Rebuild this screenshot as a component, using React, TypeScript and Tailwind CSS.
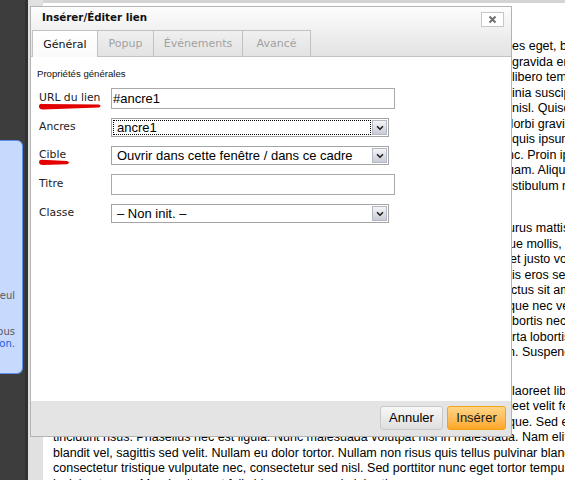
import { ChevronDown } from 'lucide-react';

type Frag = { hide: string; show: string; pre: string };

const para1: Frag[] = [
  { hide: 'Lorem ipsum dolor sit amet, consectetur adipiscing elit. Aenean ut orci vel massa suscipit pulvinar. Nulla ultrici', show: 'es eget, blandit vitae', pre: 'w-[459px]' },
  { hide: 'Nulla sollicitudin, libero vitae aliquam ultrices, quam diam ultricies augue, vitae pharetra neque nisi ut ligula, ', show: 'gravida erat', pre: 'w-[459px]' },
  { hide: 'Curabitur vel lectus at nisl consequat tempus. Quisque consequat aliquam nunc, eu hendrerit urna tristique non, ', show: 'libero tempor', pre: 'w-[459px]' },
  { hide: 'Praesent aliquet pretium erat, quis scelerisque dui tincidunt et. Phasellus eleifend mauris in arcu lac', show: 'inia suscipit', pre: 'w-[459px]' },
  { hide: 'Sed semper dolor vitae risus venenatis vel condimentum turpis euismod. Donec feugiat elementum ', show: 'nisl. Quisque', pre: 'w-[459px]' },
  { hide: 'Etiam consequat eleifend ante, ac sollicitudin neque ornare in. Mauris ac leo at mi tincidunt fringilla. ', show: 'Morbi gravida', pre: 'w-[450px]' },
  { hide: 'Vivamus semper lectus sed justo faucibus dictum. Aliquam vel urna eget dolor dictum aliquet ut', show: ' quis ipsum', pre: 'w-[459px]' },
  { hide: 'Mauris placerat, lacus eget molestie hendrerit, sapien velit ultrices neque, sed gravida ipsum mi in nu', show: 'nc. Proin ipsum', pre: 'w-[454px]' },
  { hide: 'Donec vitae metus nisl, et adipiscing ante. Integer vehicula eleifend lorem, ac posuere purus aliq', show: 'uam. Aliquam', pre: 'w-[454px]' },
  { hide: 'Fusce tempor, metus sed accumsan vehicula, erat leo fermentum mauris, vitae lobortis urna ve', show: 'stibulum nec', pre: 'w-[459px]' },
];

const para2: Frag[] = [
  { hide: 'Pellentesque habitant morbi tristique senectus et netus et malesuada fames ac turpis egestas. Nulla p', show: 'urus mattis', pre: 'w-[455px]' },
  { hide: 'Vestibulum dapibus iaculis dui, sit amet ullamcorper nisi congue vitae. Aliquam erat volutpat. Quisq', show: 'ue mollis,', pre: 'w-[456px]' },
  { hide: 'Donec ullamcorper, diam eu scelerisque convallis, lorem libero dictum magna, at tincidunt nisi felis ', show: 'et justo vol', pre: 'w-[457px]' },
  { hide: 'Integer consequat auctor mauris, quis fermentum nibh euismod vitae. Vestibulum ut mauris lacinia ', show: 'is eros sed', pre: 'w-[459px]' },
  { hide: 'Cras condimentum rutrum metus, at scelerisque eros mollis at. Nunc feugiat aliquam tincidunt. Sed le', show: 'ctus sit amet', pre: 'w-[458px]' },
  { hide: 'Morbi at nunc elit, vel posuere mi. Nam scelerisque tincidunt urna at lobortis. Fusce vitae dolor ne', show: 'que nec vel', pre: 'w-[455px]' },
  { hide: 'Curabitur molestie, arcu quis consequat scelerisque, erat tortor faucibus ligula, in tempor mi lo', show: 'bortis nec', pre: 'w-[459px]' },
  { hide: 'Aliquam eleifend faucibus massa, vitae porttitor neque adipiscing sed. Sed volutpat dolor, po', show: 'rta lobortis', pre: 'w-[459px]' },
  { hide: 'Nulla facilisi. Ut rutrum massa nec dui volutpat vel tempor turpis placerat. Etiam consequat nisl ege', show: 'n. Suspendisse', pre: 'w-[455px]' },
];

const para3Top: Frag[] = [
  { hide: 'Phasellus ut urna ut magna posuere elementum. Maecenas sit amet velit nec mauris egestas fringilla et ', show: 'laoreet libero', pre: 'w-[459px]' },
  { hide: 'Aenean vel justo quam, a ullamcorper arcu. Sed ultricies, nunc vitae commodo dictum, lorem turpis dapibus lao', show: 'eet velit feugiat', pre: 'w-[459px]' },
  { hide: 'Praesent consectetur elementum nisl, id venenatis ante lacinia sed. Integer at diam vel erat accumsan tristi', show: 'que. Sed eget', pre: 'w-[455px]' },
];

const para3Full = [
  'tincidunt risus. Phasellus nec est ligula. Nunc malesuada volutpat nisl in malesuada. Nam elit',
  'blandit vel, sagittis sed velit. Nullam eu dolor tortor. Nullam non risus quis tellus pulvinar blandit',
  'consectetur tristique vulputate nec, consectetur sed nisl. Sed porttitor nunc eget tortor tempus congue',
  'lacinia et nunc. Mauris sit amet felis id urna commodo lobortis.',
];

const FragLine = ({ f }: { f: Frag }) => (
  <div className="flex h-[15.5px] whitespace-nowrap">
    <span className={`${f.pre} shrink-0 overflow-hidden`}>{f.hide}</span>
    <span>{f.show}</span>
  </div>
);

const Arrow = () => (
  <span className="w-[15px] h-[15px] m-px flex items-center justify-center border border-[#b4b7c4] bg-gradient-to-b from-[#f4f5f8] to-[#c9ccd6]">
    <ChevronDown className="w-[10px] h-[10px] text-[#222]" strokeWidth={4} />
  </span>
);

const Select = ({ value, focused }: { value: string; focused?: boolean }) => (
  <div className="w-[278px] h-[19px] border border-[#a4a4a4] bg-white flex items-center">
    <div className={focused ? 'flex-1 h-[15px] ml-px flex items-center pl-[3px] border border-dotted border-black' : 'flex-1 h-[15px] ml-px flex items-center pl-[4px]'}>
      {value}
    </div>
    <Arrow />
  </div>
);

const Input = ({ value }: { value: string }) => (
  <div className="w-[284px] h-[21px] border border-[#a9a9a9] bg-white flex items-center pl-px">
    {value}
  </div>
);

const field = "text-[13px] text-black font-['Liberation_Sans',Arial,sans-serif]";

export default function App() {
  return (
    <div className="relative w-[565px] h-[480px] overflow-hidden bg-white flex font-['Liberation_Sans',Arial,sans-serif]">
      {/* sidebar */}
      <div className="w-[28px] shrink-0 bg-[#3d3d3d] border-r-[3px] border-[#323232]">
        <div className="mt-[140px] w-[23px] h-[234px] bg-[#c8d9fe] border border-l-0 border-[#5b8ff0] rounded-r-[6px] overflow-hidden pt-[149px] pr-[7px] text-[10px] leading-[12px] font-['DejaVu_Sans',sans-serif] text-[#5a5a5a]">
          <div className="flex justify-end whitespace-nowrap">ne plus utiliser le seul</div>
          <div className="flex justify-end whitespace-nowrap mt-[24px]">voir ces liens vous</div>
          <div className="flex justify-end whitespace-nowrap text-[#1560e8]">plus d'information.</div>
        </div>
      </div>
      {/* gutter */}
      <div className="w-[15px] shrink-0 bg-[#e1e1e1]" />
      {/* editor */}
      <div className="flex-1 border-t-[3px] border-[#d4d4d4] pl-[10px] pt-[36px] text-[12.5px] leading-[15.5px] text-black">
        <div className="mb-[27px]">
          {para1.map((f, i) => <FragLine key={i} f={f} />)}
        </div>
        <div className="mb-[23px]">
          {para2.map((f, i) => <FragLine key={i} f={f} />)}
        </div>
        <div>
          {para3Top.map((f, i) => <FragLine key={i} f={f} />)}
          {para3Full.map((t, i) => (
            <div key={i} className="h-[15.5px] whitespace-nowrap">{t}</div>
          ))}
        </div>
      </div>

      {/* dialog */}
      <div className="absolute left-[30px] top-[6px] w-[482px] h-[431px] border border-[#b3b3b3] bg-white flex flex-col font-['DejaVu_Sans',sans-serif]">
        <div className="h-[50px] bg-gradient-to-b from-[#fdfdfd] to-[#e2e2e2] flex flex-col">
          <div className="h-[23px] flex items-start justify-between">
            <span className="pl-[11px] pt-[4px] text-[10.3px] leading-[12px] font-bold text-[#111]">Insérer/Éditer lien</span>
            <span className="mt-[5px] mr-[7px] w-[23px] h-[15px] border border-[#c6c6c6] bg-white flex items-center justify-center">
              <svg width="9" height="9" viewBox="0 0 9 9">
                <path d="M1.5 1.5 L7.5 7.5 M7.5 1.5 L1.5 7.5" stroke="#707070" strokeWidth="2" />
              </svg>
            </span>
          </div>
          <div className="h-[27px] flex text-[11px] leading-[13px]">
            <div className="w-[1px] border-b border-[#c2c2c2]" />
            <div className="w-[66px] h-[27px] border border-b-0 border-[#c2c2c2] bg-gradient-to-b from-white to-[#fafafa] flex items-center justify-center text-[#111]">Général</div>
            <div className="w-[56px] h-[27px] border border-l-0 border-[#c2c2c2] flex items-center justify-center text-[#a2a2a2]">Popup</div>
            <div className="w-[89px] h-[27px] border border-l-0 border-[#c2c2c2] flex items-center justify-center text-[#a2a2a2]">Événements</div>
            <div className="w-[68px] h-[27px] border border-l-0 border-[#c2c2c2] flex items-center justify-center text-[#a2a2a2]">Avancé</div>
            <div className="flex-1 border-b border-[#c2c2c2]" />
          </div>
        </div>

        <div className="flex-1 bg-white pl-[6px] pt-[11px]">
          <div className="text-[9.6px] leading-[12px] text-[#111] font-['Liberation_Sans',Arial,sans-serif]">Propriétés générales</div>
          <div className="mt-[8px] flex flex-col gap-[9px] text-[10.8px] text-[#222]">
            <div className="flex items-center">
              <span className="relative w-[74px] pl-[2px]">
                URL du lien
                <svg className="absolute left-[0px] top-[12px]" width="68" height="9" viewBox="0 0 68 9">
                  <path d="M2 4.5 Q2 1.6 5 1.9 L62 2.4 Q65 3.6 62 5.4 L6 7.6 Q2 7.4 2 4.5 Z" fill="#e30000" />
                </svg>
              </span>
              <div className={field}><Input value="#ancre1" /></div>
            </div>
            <div className="flex items-center">
              <span className="w-[74px] pl-[2px]">Ancres</span>
              <div className={field}><Select value="ancre1" focused /></div>
            </div>
            <div className="flex items-center">
              <span className="relative w-[74px] pl-[2px]">
                Cible
                <svg className="absolute left-[0px] top-[11px]" width="36" height="9" viewBox="0 0 36 9">
                  <path d="M2 4 Q2 1.4 5 1.7 L30 3 Q34 4.6 30 6.3 L6 7 Q2 6.8 2 4 Z" fill="#e30000" />
                </svg>
              </span>
              <div className={field}><Select value="Ouvrir dans cette fenêtre / dans ce cadre" /></div>
            </div>
            <div className="flex items-center">
              <span className="w-[74px] pl-[2px]">Titre</span>
              <div className={field}><Input value="" /></div>
            </div>
            <div className="flex items-center">
              <span className="w-[74px] pl-[2px]">Classe</span>
              <div className={field}><Select value="– Non init. –" /></div>
            </div>
          </div>
        </div>

        <div className="h-[35px] bg-[#e4e4e4] flex justify-end items-start pt-[5px] pr-[5px] gap-[4px] font-['Liberation_Sans',Arial,sans-serif] text-[13px]">
          <span className="w-[63px] h-[24px] rounded-[3px] border border-[#c9c9c9] bg-gradient-to-b from-[#f7f7f7] to-[#dedede] flex items-center justify-center text-black">Annuler</span>
          <span className="w-[59px] h-[24px] rounded-[3px] border border-[#f2a316] bg-gradient-to-b from-[#ffd584] to-[#ffa623] flex items-center justify-center text-[#1a1a1a]">Insérer</span>
        </div>
      </div>
    </div>
  );
}
